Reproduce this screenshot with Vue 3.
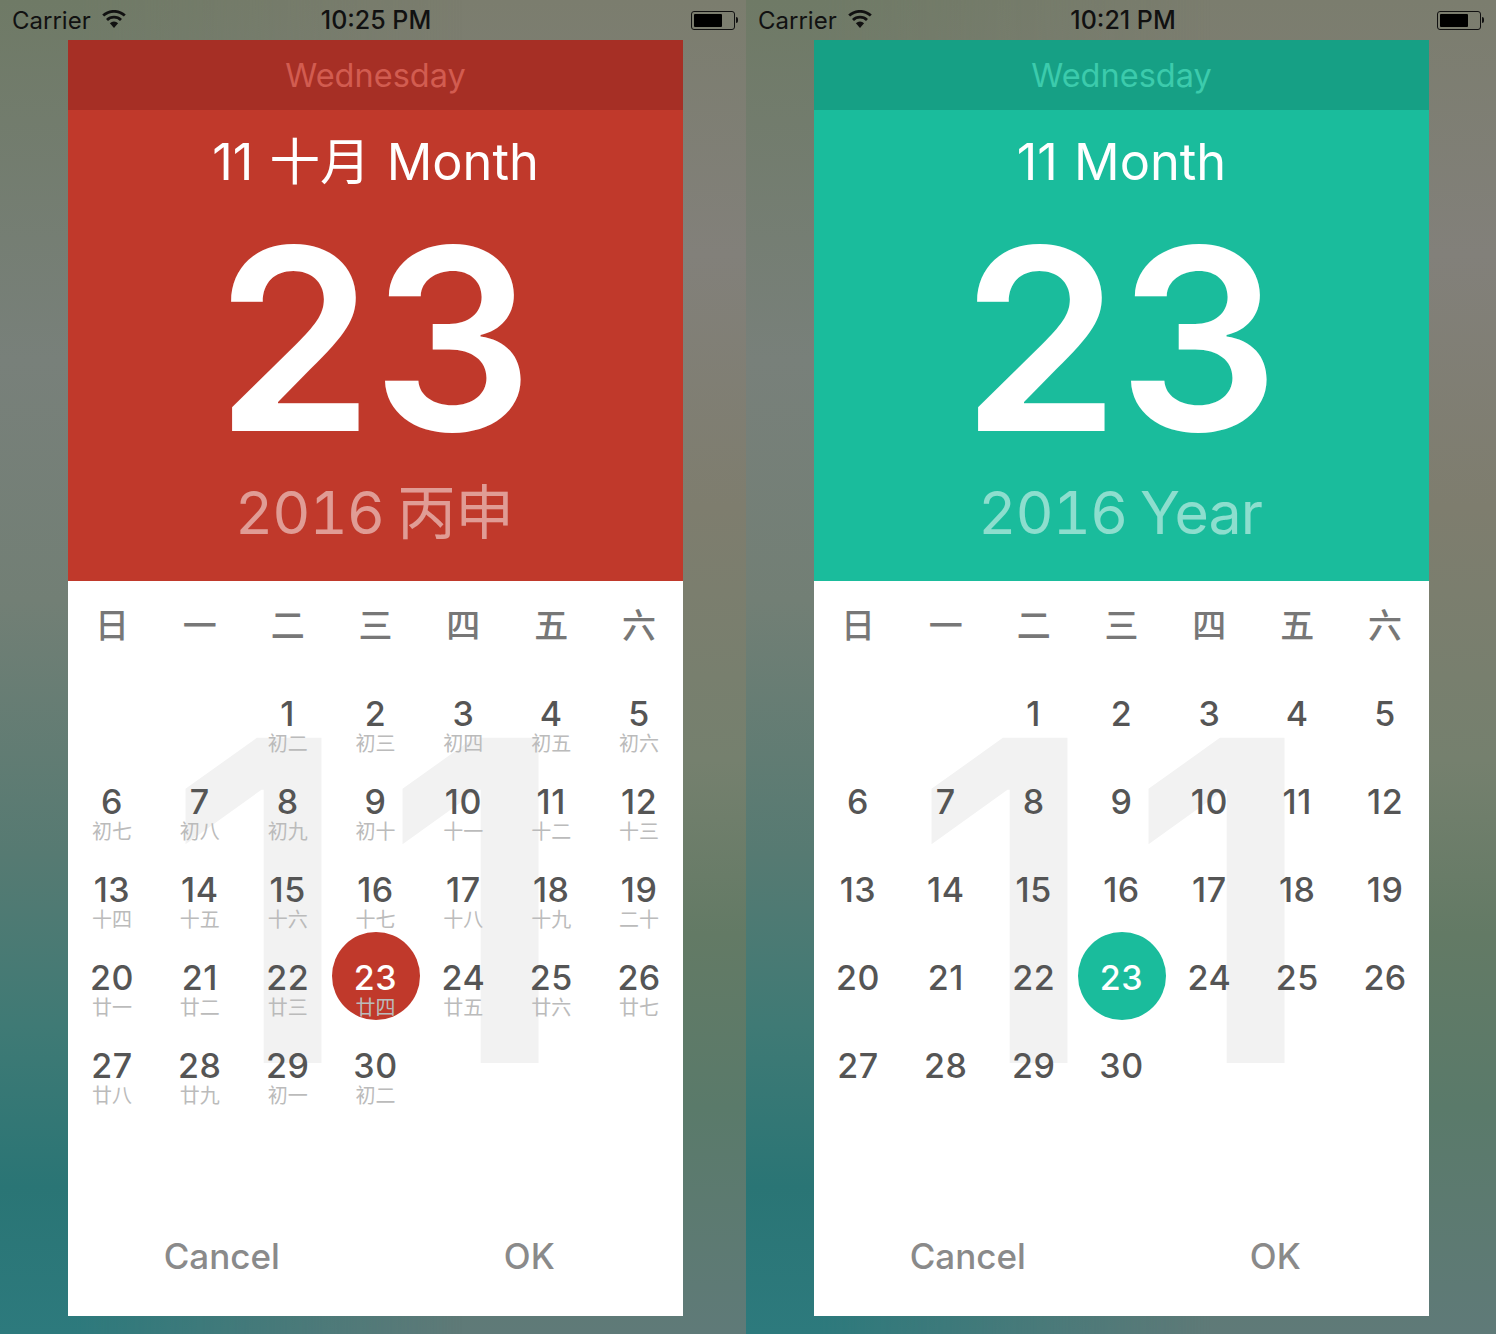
<template>
  <div class="screens">
    <div v-for="(screen, i) in screens" :key="i" class="screen" :class="screen.kind">
      <div class="status-bar">
        <div class="status-left">
          <span>Carrier</span>
          <svg class="wifi" width="24" height="18" viewBox="0 0 24 18">
            <path d="M12 18 7.9 13.2a6 6 0 0 1 8.2 0Z" fill="#111" />
            <path d="M5 9.9a10 10 0 0 1 14 0" fill="none" stroke="#111" stroke-width="2.8" />
            <path d="M1.2 5.6a15.8 15.8 0 0 1 21.6 0" fill="none" stroke="#111" stroke-width="2.8" />
          </svg>
        </div>
        <div class="status-time">{{ screen.time }}</div>
        <div class="battery">
          <div class="battery-body"><div class="battery-level"></div></div>
          <div class="battery-nub"></div>
        </div>
      </div>

      <div class="dialog">
        <div class="weekday-bar">Wednesday</div>
        <div class="date-head">
          <div class="month">{{ screen.month }}</div>
          <div class="day">23</div>
          <div class="year">{{ screen.year }}</div>
        </div>

        <div class="calendar">
          <div class="watermark">11</div>
          <div class="week-row">
            <div v-for="w in weekNames" :key="w" class="week-name">{{ w }}</div>
          </div>
          <div class="days">
            <div v-for="n in 2" :key="'blank' + n" class="day-cell"></div>
            <div v-for="d in 30" :key="d" class="day-cell" :class="{ selected: d === 23 }">
              <div class="num">{{ d }}</div>
              <div class="lunar">{{ screen.lunar ? lunarDays[d - 1] : '' }}</div>
            </div>
          </div>
        </div>

        <div class="actions">
          <button type="button" class="action">Cancel</button>
          <button type="button" class="action">OK</button>
        </div>
      </div>
    </div>
  </div>
</template>

<script setup>
const weekNames = ['日', '一', '二', '三', '四', '五', '六']

const lunarDays = [
  '初二', '初三', '初四', '初五', '初六', '初七', '初八', '初九', '初十', '十一',
  '十二', '十三', '十四', '十五', '十六', '十七', '十八', '十九', '二十', '廿一',
  '廿二', '廿三', '廿四', '廿五', '廿六', '廿七', '廿八', '廿九', '初一', '初二'
]

const screens = [
  { kind: 'red', time: '10:25 PM', month: '11 十月 Month', year: '2016 丙申', lunar: true },
  { kind: 'green', time: '10:21 PM', month: '11 Month', year: '2016 Year', lunar: false }
]
</script>

<style>
body {
  margin: 0;
}
</style>

<style scoped>
.screens {
  display: flex;
  width: 1496px;
  height: 1334px;
  overflow: hidden;
  font-family: Inter, "Noto Sans CJK SC", sans-serif;
}

.screen {
  position: relative;
  isolation: isolate;
  height: 1334px;
  box-sizing: border-box;
  padding-left: 68px;
  background: linear-gradient(180deg, #7b7d6e 0%, #82807a 19%, #7e7d6e 38%, #75806e 57%, #637a65 70%, #5a7a6a 83%, #5f7a78 100%);
}

/* teal wash that fades out towards the right of each screen */
.screen::before {
  content: "";
  position: absolute;
  inset: 0;
  z-index: -1;
  background: linear-gradient(180deg, #6f7a66 0%, #78807a 27%, #727f75 45%, #567a72 64%, #3f7a75 77%, #2a7575 89%, #2d7a7d 100%);
  -webkit-mask-image: linear-gradient(90deg, #000 0, #000 10%, transparent 62%);
  mask-image: linear-gradient(90deg, #000 0, #000 10%, transparent 62%);
}

.screen.red {
  width: 746px;
  --accent: #c0392b;
  --accent-dark: #a62f25;
  --accent-soft: #d25c50;
  --status-right: 8px;
  --time-shift: 6px;
}

.screen.green {
  width: 750px;
  --accent: #1abc9c;
  --accent-dark: #16a085;
  --accent-soft: #3ccbac;
  --status-right: 12px;
  --time-shift: 4px;
}

.status-bar {
  position: relative;
  display: flex;
  align-items: center;
  justify-content: space-between;
  height: 40px;
  margin-left: -68px;
  padding: 0 var(--status-right) 0 12px;
  font-size: 24px;
  color: #111;
}

.status-left {
  display: flex;
  align-items: center;
  gap: 12px;
}

.wifi {
  margin-top: -3px;
  margin-left: -1px;
}

.status-time {
  position: absolute;
  left: var(--time-shift);
  right: 0;
  text-align: center;
  font-size: 25px;
  font-weight: 500;
  pointer-events: none;
}

.battery {
  display: flex;
  align-items: center;
  gap: 1px;
}

.battery-body {
  box-sizing: border-box;
  width: 44px;
  height: 19px;
  padding: 2px;
  border: 1px solid #111;
  border-radius: 3px;
}

.battery-level {
  width: 28px;
  height: 100%;
  background: #000;
  border-radius: 1px;
}

.battery-nub {
  width: 2px;
  height: 6px;
  background: #111;
  border-radius: 0 2px 2px 0;
}

.dialog {
  display: flex;
  flex-direction: column;
  width: 615px;
  height: 1276px;
  background: #fff;
}

.weekday-bar {
  height: 70px;
  line-height: 72px;
  text-align: center;
  font-size: 32.5px;
  font-weight: 400;
  color: var(--accent-soft);
  background: var(--accent-dark);
}

.date-head {
  display: flex;
  flex-direction: column;
  align-items: center;
  height: 471px;
  color: #fff;
  background: var(--accent);
}

.month {
  margin-top: 20px;
  height: 64px;
  line-height: 64px;
  font-size: 50.5px;
  font-weight: 400;
  word-spacing: 2px;
}

.day {
  height: 290px;
  line-height: 290px;
  font-size: 254px;
  font-weight: 600;
  letter-spacing: -2px;
  margin-left: -4px;
}

.year {
  height: 76px;
  margin-top: -9px;
  margin-left: -3px;
  line-height: 76px;
  font-size: 59px;
  font-weight: 400;
  font-variant-numeric: tabular-nums;
  letter-spacing: -1px;
  word-spacing: -2px;
  color: rgba(255, 255, 255, 0.5);
}

.calendar {
  position: relative;
  flex: 1;
}

.watermark {
  position: absolute;
  top: 60px;
  left: 97px;
  font-size: 447px;
  font-weight: 600;
  line-height: 520px;
  letter-spacing: 28px;
  color: #f2f2f2;
}

.week-row,
.days {
  position: relative;
  display: grid;
  grid-template-columns: repeat(7, minmax(0, 1fr));
}

.week-row {
  height: 87px;
}

.week-name {
  text-align: center;
  line-height: 90px;
  font-size: 34px;
  font-weight: 500;
  color: #777;
}

.days {
  grid-auto-rows: 88px;
}

.day-cell {
  box-sizing: border-box;
  width: 88px;
  height: 88px;
  justify-self: center;
  padding-top: 28px;
  border-radius: 50%;
  text-align: center;
  color: #555;
}

.day-cell.selected {
  color: #fff;
  background: var(--accent);
}

.num {
  height: 36px;
  line-height: 36px;
  font-size: 34px;
  font-weight: 500;
  letter-spacing: 0.5px;
}

.lunar {
  height: 20px;
  margin-top: 2px;
  line-height: 20px;
  font-size: 20px;
  color: #bbb;
}

.actions {
  display: flex;
  height: 120px;
}

.action {
  flex: 1;
  padding: 0;
  border: none;
  background: none;
  font-family: inherit;
  font-size: 35px;
  font-weight: 500;
  color: #8a8a8a;
}
</style>
